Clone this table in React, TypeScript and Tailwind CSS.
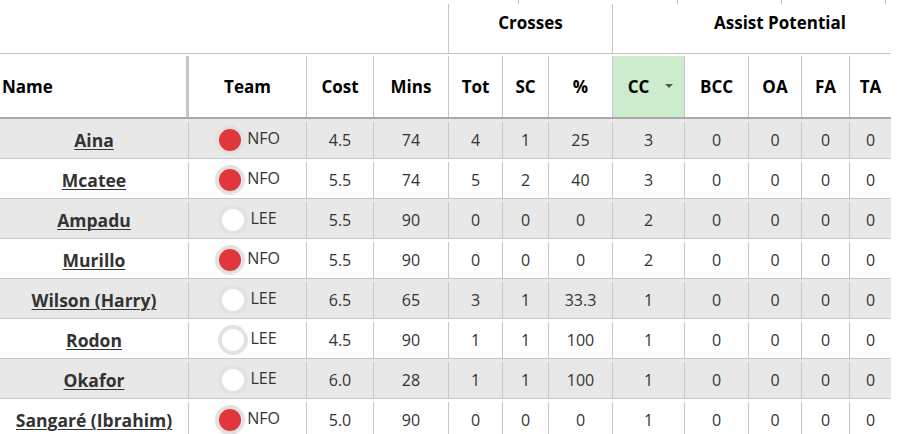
type Row = {
  name: string;
  team: "NFO" | "LEE";
  cost: string;
  mins: number;
  tot: number;
  sc: number;
  pct: string;
  cc: number;
};

const rows: Row[] = [
  { name: "Aina", team: "NFO", cost: "4.5", mins: 74, tot: 4, sc: 1, pct: "25", cc: 3 },
  { name: "Mcatee", team: "NFO", cost: "5.5", mins: 74, tot: 5, sc: 2, pct: "40", cc: 3 },
  { name: "Ampadu", team: "LEE", cost: "5.5", mins: 90, tot: 0, sc: 0, pct: "0", cc: 2 },
  { name: "Murillo", team: "NFO", cost: "5.5", mins: 90, tot: 0, sc: 0, pct: "0", cc: 2 },
  { name: "Wilson (Harry)", team: "LEE", cost: "6.5", mins: 65, tot: 3, sc: 1, pct: "33.3", cc: 1 },
  { name: "Rodon", team: "LEE", cost: "4.5", mins: 90, tot: 1, sc: 1, pct: "100", cc: 1 },
  { name: "Okafor", team: "LEE", cost: "6.0", mins: 28, tot: 1, sc: 1, pct: "100", cc: 1 },
  { name: "Sangaré (Ibrahim)", team: "NFO", cost: "5.0", mins: 90, tot: 0, sc: 0, pct: "0", cc: 1 },
];

const grid =
  "grid grid-cols-[189px_118px_67px_75px_54px_46px_64px_72px_64px_53px_48px_41px]";

function TeamBadge({ team }: { team: Row["team"] }) {
  return (
    <div className="flex items-center justify-center gap-[2px]">
      <span
        className={`h-[30px] w-[30px] shrink-0 rounded-full border-4 border-[#e2e2e2] ${
          team === "NFO" ? "bg-[#e1363c]" : "bg-white"
        }`}
      />
      <span className="mb-[4px]">{team}</span>
    </div>
  );
}

export default function App() {
  const cell = "flex items-center justify-center border-r border-[#c6c6c6]";
  const head = "flex items-center justify-center border-r border-[#c6c6c6] font-bold text-[17px] text-black";

  return (
    <div
      className="h-[434px] w-[903px] overflow-hidden bg-white text-[#333]"
      style={{ fontFamily: '"Open Sans", "Noto Sans", sans-serif' }}
    >
      <div className="w-[891px]">
        {/* cut-off row above */}
        <div className="flex h-[4px]">
          <div className="w-[519px] border-r border-[#c6c6c6]" />
          <div className="w-[159px] border-r border-[#c6c6c6]" />
          <div className="w-[104px] border-r border-[#c6c6c6]" />
          <div className="w-[104px] border-r border-[#c6c6c6]" />
        </div>

        {/* group header */}
        <div className={`${grid} h-[50px] border-b border-[#c6c6c6] text-[17px] font-bold text-black`}>
          <div className="col-span-4 border-r border-[#c6c6c6]" />
          <div className="col-span-3 flex justify-center border-r border-[#c6c6c6] pt-[7px] leading-6">
            Crosses
          </div>
          <div className="col-span-5 flex justify-center pl-[56px] pt-[7px] leading-6">
            Assist Potential
          </div>
        </div>

        {/* column header */}
        <div className={`${grid} h-[65px] border-b-2 border-[#a9a9a9] pt-[2px]`}>
          <div className="flex items-center border-r-[3px] border-[#c6c6c6] pl-[2px] text-[17px] font-bold text-black">
            Name
          </div>
          <div className={head}>Team</div>
          <div className={head}>Cost</div>
          <div className={head}>Mins</div>
          <div className={head}>Tot</div>
          <div className={head}>SC</div>
          <div className={head}>%</div>
          <div className={`${head} gap-[16px] bg-[#cdeccd] pl-[4px]`}>
            <span>CC</span>
            <svg width="8" height="4" viewBox="0 0 8 4" className="mt-[-2px]">
              <path d="M0 0h8L4 4z" fill="#555" />
            </svg>
          </div>
          <div className={head}>BCC</div>
          <div className={head}>OA</div>
          <div className={head}>FA</div>
          <div className="flex items-center justify-center text-[17px] font-bold text-black">TA</div>
        </div>

        {/* body */}
        {rows.map((r, i) => (
          <div
            key={r.name}
            className={`${grid} h-[40px] border-b border-[#c6c6c6] pt-[3px] text-[16px] ${
              i % 2 === 0 ? "bg-[#e8e8e8]" : "bg-white"
            }`}
          >
            <div className={`${cell} text-[17.5px] font-bold`}>
              <a className="underline decoration-1 underline-offset-2">{r.name}</a>
            </div>
            <div className={cell}>
              <TeamBadge team={r.team} />
            </div>
            <div className={cell}>{r.cost}</div>
            <div className={cell}>{r.mins}</div>
            <div className={cell}>{r.tot}</div>
            <div className={cell}>{r.sc}</div>
            <div className={cell}>{r.pct}</div>
            <div className={cell}>{r.cc}</div>
            <div className={cell}>0</div>
            <div className={cell}>0</div>
            <div className={cell}>0</div>
            <div className="flex items-center justify-center">0</div>
          </div>
        ))}
      </div>
    </div>
  );
}
